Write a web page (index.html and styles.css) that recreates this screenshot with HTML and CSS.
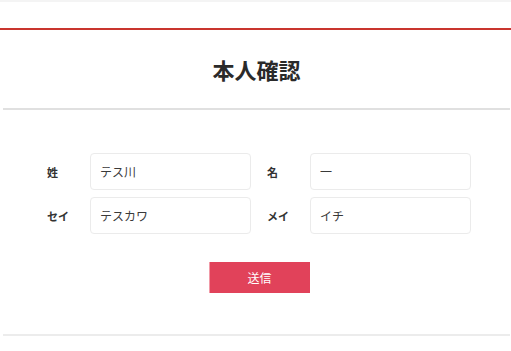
FILE: index.html
```html
<!DOCTYPE html>
<html lang="ja">
<head>
  <meta charset="UTF-8">
  <meta name="viewport" content="width=device-width, initial-scale=1.0">
  <title>本人確認</title>
  <link rel="stylesheet" href="styles.css">
</head>
<body>
  <header class="site-header"></header>
  <main class="panel">
    <h1 class="panel-title">本人確認</h1>
    <form class="identity-form">
      <div class="form-rows">
        <div class="field">
          <label class="field-label" for="sei">姓</label>
          <input class="field-input" id="sei" type="text" value="テス川">
        </div>
        <div class="field">
          <label class="field-label" for="mei">名</label>
          <input class="field-input" id="mei" type="text" value="一">
        </div>
        <div class="field">
          <label class="field-label" for="sei-kana">セイ</label>
          <input class="field-input" id="sei-kana" type="text" value="テスカワ">
        </div>
        <div class="field">
          <label class="field-label" for="mei-kana">メイ</label>
          <input class="field-input" id="mei-kana" type="text" value="イチ">
        </div>
      </div>
      <div class="form-actions">
        <button class="submit-button" type="button">送信</button>
      </div>
    </form>
  </main>
</body>
</html>
```

FILE: styles.css
```css
html, body {
  margin: 0;
  padding: 0;
  background-color: #ffffff;
  font-family: "Noto Sans CJK JP", "Noto Sans", sans-serif;
  color: #333333;
}
.site-header {
  height: 26px;
  border-top: 2px solid #f4f4f4;
  border-bottom: 2px solid #c9352e; /* 赤いライン */
}
.panel {
  margin: 0 1px 0 3px;
  border-bottom: 2px solid #ececec;
}
.panel-title {
  margin: 0;
  height: 78px;
  display: flex;
  align-items: center;
  justify-content: center;
  font-size: 22px;
  font-weight: bold;
  color: #2a2a2a;
  border-bottom: 2px solid #e0e0e0;
}
.identity-form {
  width: 424px;
  margin-left: 44px;
  padding: 43px 0 41px;
}
.form-rows {
  display: grid;
  grid-template-columns: 204px 204px;
  column-gap: 16px;
  row-gap: 7px;
}
.field {
  display: flex;
  align-items: center;
}
.field-label {
  width: 43px;
  font-size: 11px;
  font-weight: bold;
  color: #333333;
}
.field-input {
  width: 161px;
  height: 37px;
  box-sizing: border-box;
  padding: 0 9px;
  border: 1px solid #ebebeb;
  border-radius: 4px;
  font-family: "Noto Sans CJK JP", sans-serif;
  font-size: 12px;
  color: #3a3a3a;
  background-color: #ffffff;
}
.form-actions {
  display: flex;
  justify-content: center;
  margin-top: 28px;
}
.submit-button {
  width: 101px;
  height: 31px;
  border: none;
  border-left: 1px solid #f19aa7;
  background-color: #e1425a; /* 送信ボタン */
  color: #ffffff;
  font-family: "Noto Sans CJK JP", sans-serif;
  font-size: 12px;
  padding: 0;
}
```
